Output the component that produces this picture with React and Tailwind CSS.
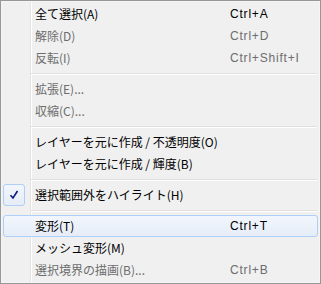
import React from "react";

const jp = { fontFamily: '"Noto Sans CJK JP", "Noto Sans", sans-serif' };
const lat = { fontFamily: '"Liberation Sans", Arial, sans-serif' };

function Item({ label, shortcut, disabled, checked, highlight }) {
  const color = disabled ? "text-[#6d6d6d]" : "text-black";
  return (
    <div className="relative flex h-[22px] items-center">
      {highlight && (
        <div className="absolute inset-0 rounded-[3px] border border-[#aecff7] bg-gradient-to-b from-[#f2f6fc] to-[#e6edf8]" />
      )}
      {checked && (
        <div className="absolute left-0 top-0 flex h-[22px] w-[22px] items-center justify-center rounded-[3px] border border-[#aecff7] bg-gradient-to-b from-[#f2f6fc] to-[#e6edf8]">
          <svg width="10" height="10" viewBox="0 0 10 10">
            <path d="M1.5 5.2 L4 8 L8.5 1" fill="none" stroke="#0c1a7a" strokeWidth="1.6" />
          </svg>
        </div>
      )}
      <div className={`relative ml-[32px] w-[195px] text-[12px] leading-none ${color}`} style={jp}>
        {label}
      </div>
      {shortcut && (
        <div className={`relative text-[12px] leading-none tracking-[0.8px] ${color}`} style={lat}>
          {shortcut}
        </div>
      )}
    </div>
  );
}

function Sep() {
  return (
    <div className="flex h-[9px] flex-col pl-[28px] pr-[1px] pt-[4px]">
      <div className="h-px bg-[#e0e0e0]" />
      <div className="h-px bg-white" />
    </div>
  );
}

export default function App() {
  return (
    <div className="h-[284px] w-[321px] border border-[#979797] bg-[#f0f0f0]">
      <div className="relative h-full w-full border border-[#f5f5f5] p-px">
        <div className="absolute bottom-0 left-[28px] top-0 flex">
          <div className="w-px bg-[#e2e3e3]" />
          <div className="w-px bg-white" />
        </div>
        <div className="relative flex flex-col">
          <Item label="全て選択(A)" shortcut="Ctrl+A" />
          <Item label="解除(D)" shortcut="Ctrl+D" disabled />
          <Item label="反転(I)" shortcut="Ctrl+Shift+I" disabled />
          <Sep />
          <Item label="拡張(E)..." disabled />
          <Item label="収縮(C)..." disabled />
          <Sep />
          <Item label="レイヤーを元に作成 / 不透明度(O)" />
          <Item label="レイヤーを元に作成 / 輝度(B)" />
          <Sep />
          <Item label="選択範囲外をハイライト(H)" checked />
          <Sep />
          <Item label="変形(T)" shortcut="Ctrl+T" highlight />
          <Item label="メッシュ変形(M)" />
          <Item label="選択境界の描画(B)..." shortcut="Ctrl+B" disabled />
        </div>
      </div>
    </div>
  );
}
